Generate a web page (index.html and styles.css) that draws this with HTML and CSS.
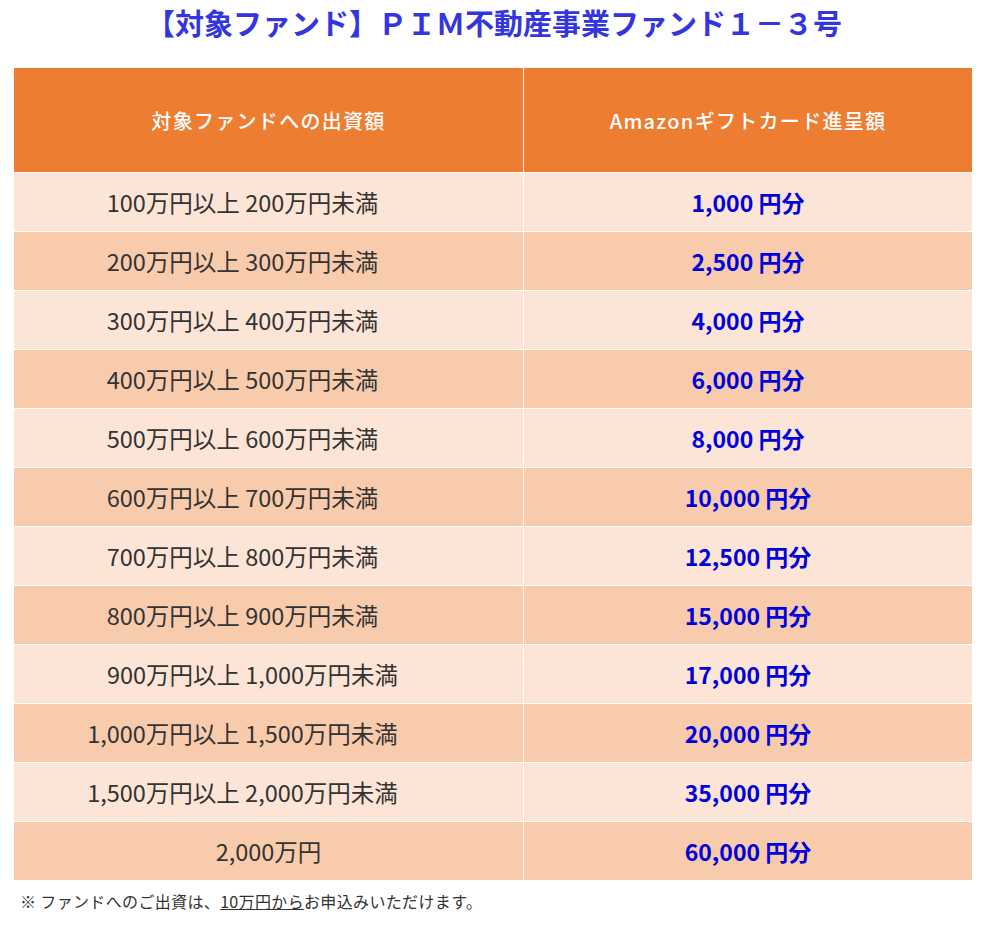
FILE: index.html
```html
<!DOCTYPE html>
<html lang="ja">
<head>
<meta charset="utf-8">
<link rel="stylesheet" href="styles.css">
</head>
<body>
<div class="page">
  <h1 class="title">【対象ファンド】ＰＩＭ不動産事業ファンド１－３号</h1>
  <table class="gift">
    <thead>
      <tr><th class="c1">対象ファンドへの出資額</th><th class="c2">Amazonギフトカード進呈額</th></tr>
    </thead>
    <tbody>
      <tr class="odd"><td class="shift">100万円以上 200万円未満</td><td class="val">1,000 円分</td></tr>
      <tr class="even"><td class="shift">200万円以上 300万円未満</td><td class="val">2,500 円分</td></tr>
      <tr class="odd"><td class="shift">300万円以上 400万円未満</td><td class="val">4,000 円分</td></tr>
      <tr class="even"><td class="shift">400万円以上 500万円未満</td><td class="val">6,000 円分</td></tr>
      <tr class="odd"><td class="shift">500万円以上 600万円未満</td><td class="val">8,000 円分</td></tr>
      <tr class="even"><td class="shift">600万円以上 700万円未満</td><td class="val">10,000 円分</td></tr>
      <tr class="odd"><td class="shift">700万円以上 800万円未満</td><td class="val">12,500 円分</td></tr>
      <tr class="even"><td class="shift">800万円以上 900万円未満</td><td class="val">15,000 円分</td></tr>
      <tr class="odd"><td class="shift-s">900万円以上 1,000万円未満</td><td class="val">17,000 円分</td></tr>
      <tr class="even"><td class="shift">1,000万円以上 1,500万円未満</td><td class="val">20,000 円分</td></tr>
      <tr class="odd"><td class="shift">1,500万円以上 2,000万円未満</td><td class="val">35,000 円分</td></tr>
      <tr class="even"><td>2,000万円</td><td class="val">60,000 円分</td></tr>
    </tbody>
  </table>
  <p class="note">※ ファンドへのご出資は、<span class="ul">10万円から</span>お申込みいただけます。</p>
</div>
</body>
</html>
```
FILE: styles.css
```css
html, body {
  margin: 0;
  padding: 0;
  background: #ffffff;
}
body {
  font-family: "Noto Sans CJK JP", "Noto Sans", sans-serif;
  color: #333333;
}
.page {
  width: 958px;
  padding: 0 11px 0 14px;
}
.title {
  margin: 0;
  padding: 4px 0 0 2px;
  height: 68px;
  box-sizing: border-box;
  text-align: center;
  font-size: 29px;
  line-height: 36px;
  font-weight: 700;
  color: #3535e0;
  white-space: nowrap;
}
.gift {
  width: 958px;
  border-collapse: collapse;
  table-layout: fixed;
}
.gift th, .gift td {
  border: 1px solid #ffffff;
  text-align: center;
  padding: 0;
  white-space: nowrap;
}
.gift tr > :first-child { border-left: none; }
.gift tr > :last-child { border-right: none; }
.gift thead th {
  border-top: none;
  background: #ed7d31;
  color: #ffffff;
  font-size: 20px;
  letter-spacing: 1.3px;
  font-weight: 500;
  height: 104px;
}
.gift .c1 { width: 509px; }
.gift tbody td {
  height: 58px;
  font-size: 23.5px;
  color: #333333;
}
.gift tbody td.shift { padding-right: 52px; }
.gift tbody td.shift-s { padding-right: 32px; }
.gift tbody tr:last-child td { border-bottom: none; }
.gift tr.odd td { background: #fce4d6; }
.gift tr.even td { background: #f8cbad; }
.gift td.val {
  color: #0000dd;
  font-weight: 700;
  font-size: 23px;
}
.note {
  margin: 10px 0 0 6px;
  font-size: 16px;
  letter-spacing: 0.35px;
  line-height: 22px;
  color: #333333;
}
.ul {
  text-decoration: underline;
}
```
